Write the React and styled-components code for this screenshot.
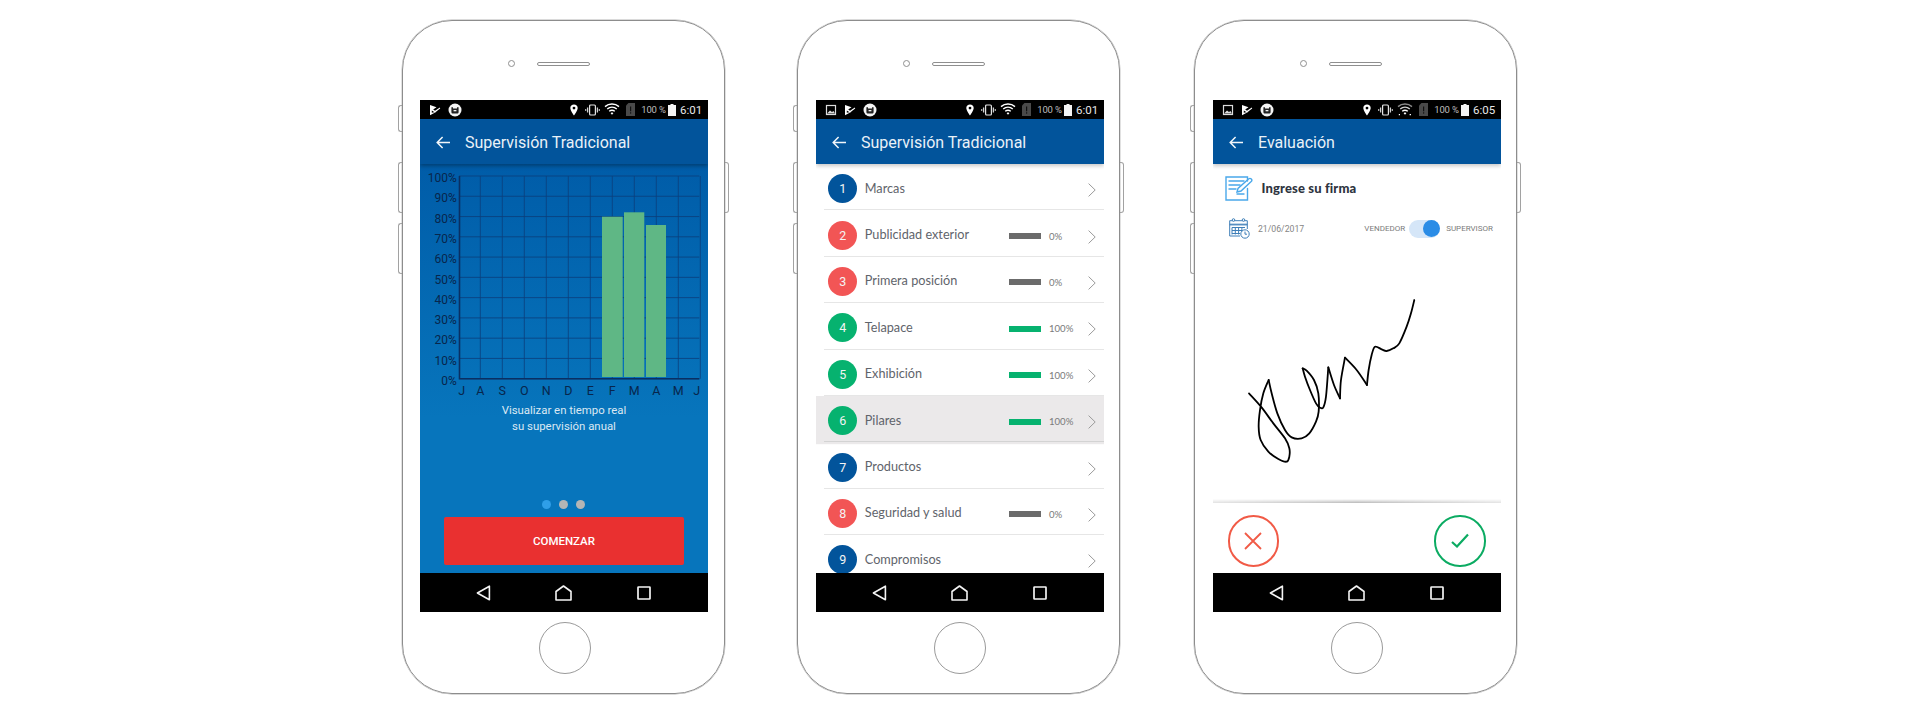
import React from 'react';
import styled, { createGlobalStyle } from 'styled-components';

const BLUE = '#02549b';
const RED = '#f25555';
const GREEN = '#06b26f';

const GlobalStyle = createGlobalStyle`
  html, body {
    margin: 0;
    padding: 0;
    background: #fff;
  }
  * {
    box-sizing: border-box;
  }
`;

const Page = styled.div`
  width: 1920px;
  height: 715px;
  overflow: hidden;
  padding: 20px 0 0 402.3px;
  display: grid;
  grid-template-columns: 395px 397px 323px;
  align-items: start;
  font-family: Roboto, "Liberation Sans", sans-serif;
`;

const Phone = styled.div`
  position: relative;
  width: 323px;
  height: 674px;
  border: 1px solid #8d8d8d;
  border-radius: 50px;
  box-shadow: 0 0 0 0.4px #b5b5b5;
  display: flex;
  flex-direction: column;
`;

const SideKey = styled.span`
  position: absolute;
  top: ${({ $top }) => $top}px;
  height: ${({ $h }) => $h}px;
  width: 4px;
  border: 1px solid #a2a2a2;
  ${({ $right }) => ($right
    ? 'right: -5px; border-left: 0; border-radius: 0 3px 3px 0;'
    : 'left: -5px; border-right: 0; border-radius: 3px 0 0 3px;')}
`;

const SensorRow = styled.div`
  height: 79px;
  padding: 39px 0 0 105.2px;
  display: flex;
  align-items: flex-start;
`;

const Camera = styled.span`
  width: 7px;
  height: 7px;
  border: 1px solid #8f8f8f;
  border-radius: 50%;
  margin-right: 21.5px;
`;

const Speaker = styled.span`
  width: 53px;
  height: 4px;
  margin-top: 1.5px;
  border: 1px solid #8f8f8f;
  border-radius: 2px;
`;

const Screen = styled.div`
  width: 288px;
  height: 512px;
  margin-left: ${({ $left }) => $left}px;
  background: #fff;
  display: flex;
  flex-direction: column;
  overflow: hidden;
`;

const HomeButton = styled.span`
  width: 52px;
  height: 52px;
  margin: 10px 0 0 136px;
  border: 1px solid #9a9a9a;
  border-radius: 50%;
`;

// status bar
const StatusBar = styled.div`
  flex: none;
  height: 19px;
  background: #000;
  display: flex;
  align-items: center;
  padding: 0 8px 0 9px;
`;

const StatusLeft = styled.div`
  display: flex;
  align-items: center;
  gap: 7px;
  flex: 1;
`;

const StatusIcon = styled.svg`
  display: block;
  flex: none;
  margin-right: ${({ $mr }) => $mr || 0}px;
`;

const Percent = styled.span`
  font-size: 9.5px;
  color: #bdbdbd;
  margin-right: 2px;
  letter-spacing: -0.1px;
`;

const Clock = styled.span`
  font-size: 11.5px;
  color: #e8e8e8;
  width: 20px;
  white-space: nowrap;
`;

const ImageGlyph = () => (
  <StatusIcon width="12" height="12" viewBox="0 0 12 12" fill="none">
    <rect x="1.5" y="1.5" width="9" height="9" stroke="#ddd" strokeWidth="1.2" />
    <path d="M2 9.5 L5 6.5 L7 8 L8.5 7 L10 9.5 Z" fill="#ddd" />
  </StatusIcon>
);

const PlayGlyph = () => (
  <StatusIcon width="12" height="12" viewBox="0 0 12 12">
    <path d="M1 1 L7.5 3.2 L4.2 5.6 L6 6.8 L10.8 3.6 L11.2 4.4 L6 8.6 L2.8 6.4 V8.8 L7.6 7.8 L1 11.2 Z" fill="#fff" />
  </StatusIcon>
);

const FaceGlyph = () => (
  <StatusIcon width="14" height="14" viewBox="0 0 14 14">
    <circle cx="7" cy="7" r="6.5" fill="#f4f4f4" />
    <path d="M3.4 4.2 H5 V5.6 H9 V4.2 H10.6 V9 C10.6 10 10 10.6 9 10.6 H5 C4 10.6 3.4 10 3.4 9 Z" fill="#222" />
    <rect x="5.6" y="7" width="2.8" height="1.3" fill="#f4f4f4" />
  </StatusIcon>
);

const PinGlyph = () => (
  <StatusIcon $mr={7} width="8" height="12" viewBox="0 0 8 12">
    <path fillRule="evenodd" d="M4 0.5 C1.9 0.5 0.3 2 0.3 4 C0.3 6.6 4 11.5 4 11.5 C4 11.5 7.7 6.6 7.7 4 C7.7 2 6.1 0.5 4 0.5 Z M4 2.7 A1.4 1.4 0 1 1 4 5.5 A1.4 1.4 0 1 1 4 2.7 Z" fill="#fff" />
  </StatusIcon>
);

const VibrateGlyph = () => (
  <StatusIcon $mr={4} width="15" height="12" viewBox="0 0 15 12" fill="none">
    <rect x="4.6" y="1" width="5.8" height="10" rx="1" stroke="#e4e4e4" strokeWidth="1.2" />
    <path d="M2.6 3.6 V8.4 M12.4 3.6 V8.4" stroke="#cfcfcf" strokeWidth="1.3" />
    <path d="M0.7 5 V7 M14.3 5 V7" stroke="#b5b5b5" strokeWidth="1.2" />
  </StatusIcon>
);

const WifiGlyph = ({ weak }) => (
  <StatusIcon $mr={6} width="16" height="13" viewBox="0 0 16 13" fill="none" strokeWidth="1.4">
    <path d="M1 3.6 C5 0.2 11 0.2 15 3.6" stroke={weak ? '#8a8a8a' : '#fff'} />
    <path d="M3.2 6 C6 3.7 10 3.7 12.8 6" stroke={weak ? '#d0d0d0' : '#fff'} />
    <path d="M5.2 8.3 C6.9 7.1 9.1 7.1 10.8 8.3" stroke="#fff" />
    <path d="M6.6 10.2 L8 9.2 L9.4 10.2 L8 11.8 Z" fill="#fff" stroke="none" />
    <path d="M12.6 11 H14 V12.2 H12.6 Z M1.8 11 H3 V12.2 H1.8 Z" fill={weak ? '#fff' : 'none'} stroke="none" />
  </StatusIcon>
);

const SimGlyph = () => (
  <StatusIcon $mr={6} width="9" height="13" viewBox="0 0 9 13">
    <path d="M2.5 0 H9 V13 H0 V2.5 Z" fill="#4a4a4a" />
    <rect x="4" y="3.5" width="1.2" height="4.8" fill="#111" />
    <rect x="4" y="9.3" width="1.2" height="1.3" fill="#111" />
  </StatusIcon>
);

const BatteryGlyph = () => (
  <StatusIcon $mr={4} width="8" height="12" viewBox="0 0 8 12">
    <path d="M2.5 0 H5.5 V1 H8 V12 H0 V1 H2.5 Z" fill="#f4f4f4" />
  </StatusIcon>
);

const Status = ({ time, image, weak }) => (
  <StatusBar>
    <StatusLeft>
      {image && <ImageGlyph />}
      <PlayGlyph />
      <FaceGlyph />
    </StatusLeft>
    <PinGlyph />
    <VibrateGlyph />
    <WifiGlyph weak={weak} />
    <SimGlyph />
    <Percent>100 %</Percent>
    <BatteryGlyph />
    <Clock>{time}</Clock>
  </StatusBar>
);

// app bar
const AppBar = styled.div`
  flex: none;
  position: relative;
  z-index: 2;
  height: 45px;
  background: ${BLUE};
  display: flex;
  align-items: center;
  padding: 1px 0 0 16px;
  gap: 15px;
  box-shadow: 0 2px 4px rgba(0, 0, 0, ${({ $soft }) => ($soft ? 0.22 : 0.32)});
`;

const Title = styled.span`
  font-size: 16px;
  color: #e9f1f8;
  white-space: nowrap;
`;

const Header = ({ title, soft }) => (
  <AppBar $soft={soft}>
    <svg width="14" height="13" viewBox="0 0 14 13" fill="none" stroke="#f2f6fa" strokeWidth="1.5">
      <path d="M14 6.5 H1.2 M6.6 1 L1.2 6.5 L6.6 12" />
    </svg>
    <Title>{title}</Title>
  </AppBar>
);

// nav bar
const NavBar = styled.div`
  flex: none;
  height: 39px;
  background: #000;
  display: grid;
  grid-template-columns: repeat(3, 80px);
  justify-content: center;
  justify-items: center;
  align-items: center;
`;

const Nav = () => (
  <NavBar>
    <svg width="15" height="16" viewBox="0 0 15 16" fill="none" stroke="#f4f4f4" strokeWidth="1.6" strokeLinejoin="round">
      <path d="M13.4 1.2 V14.8 L1.4 8 Z" />
    </svg>
    <svg width="17" height="16" viewBox="0 0 17 16" fill="none" stroke="#f4f4f4" strokeWidth="1.6" strokeLinejoin="round">
      <path d="M1 6.5 L8.5 1 L16 6.5 V15 H1 Z" />
    </svg>
    <svg width="14" height="14" viewBox="0 0 14 14" fill="none" stroke="#f4f4f4" strokeWidth="1.7">
      <rect x="1" y="1" width="12" height="12" rx="0.5" />
    </svg>
  </NavBar>
);

// first screen
const BlueBody = styled.div`
  flex: 1;
  min-height: 0;
  display: flex;
  flex-direction: column;
  background: linear-gradient(to bottom, #005ca8 0%, #0775bc 62%, #0775bc 100%);
`;

const ChartSvg = styled.svg`
  display: block;
  flex: none;
  font-family: Roboto, "Liberation Sans", sans-serif;
`;

const Caption = styled.p`
  margin: 3px 0 0;
  font-size: 11.4px;
  line-height: 15.5px;
  text-align: center;
  color: #dbe8f3;
`;

const Dots = styled.div`
  margin-top: auto;
  display: flex;
  justify-content: center;
  gap: 8px;
`;

const Dot = styled.span`
  width: 9px;
  height: 9px;
  border-radius: 50%;
  background: ${({ $active }) => ($active ? '#2f9fe8' : '#b5b5b5')};
`;

const StartButton = styled.div`
  margin: 8px 24px 8px;
  height: 48px;
  background: #e93030;
  border-radius: 2px;
  display: flex;
  align-items: center;
  justify-content: center;
  color: #fff;
  font-size: 11.5px;
  font-weight: 500;
`;

const MONTHS = [
  ['J', 41.7], ['A', 60.3], ['S', 82.3], ['O', 104.3], ['N', 126.3], ['D', 148.3],
  ['E', 170.3], ['F', 192.3], ['M', 214.3], ['A', 236.3], ['M', 258.3], ['J', 276.7]
];
const BARS = [[182, 20.7, 52.7], [204, 20.3, 48.3], [226, 20, 61]];

const Chart = () => {
  const rows = Array.from({ length: 11 }, (_, i) => 12 + i * 20.27);
  const columns = Array.from({ length: 11 }, (_, i) => 60.3 + i * 22);
  return (
    <ChartSvg width="288" height="236" viewBox="0 0 288 236">
      {rows.map((y, i) => (
        <g key={y}>
          <line x1="39" x2="279.3" y1={y} y2={y} stroke="#0b3f7c" strokeOpacity="0.8" strokeWidth="1" />
          <text x="36.8" y={y + 6.2} textAnchor="end" fontSize="12" fill="#08264c">{100 - i * 10}%</text>
        </g>
      ))}
      {columns.map((x) => (
        <line key={x} x1={x} x2={x} y1="12" y2="214.7" stroke="#0b3f7c" strokeOpacity="0.8" strokeWidth="1" />
      ))}
      {BARS.map(([x, w, y]) => (
        <rect key={x} x={x} y={y} width={w} height={213 - y} fill="#5fb785" />
      ))}
      <path d="M39.5 12 V214.7 H279.3" fill="none" stroke="#0a2f63" strokeWidth="1.6" />
      {MONTHS.map(([m, x]) => (
        <text key={x} x={x} y="230.5" textAnchor="middle" fontSize="12.5" fill="#08264c">{m}</text>
      ))}
    </ChartSvg>
  );
};

// second screen
const List = styled.div`
  flex: 1;
  min-height: 0;
  overflow: hidden;
`;

const Row = styled.div`
  height: 46.4px;
  background: ${({ $active }) => ($active ? '#ebe9ea' : 'transparent')};
  ${({ $active }) => ($active ? 'box-shadow: 0 2.2px 0 #ebe9ea;' : '')}
`;

const RowInner = styled.div`
  height: 100%;
  margin-left: 8px;
  padding: 4px 8px 0 4.3px;
  border-bottom: 1.6px solid ${({ $active }) => ($active ? '#d3d3d3' : '#e6e6e6')};
  display: grid;
  grid-template-columns: 29px 1fr 32px 47px 8px;
  align-items: center;
`;

const Badge = styled.span`
  width: 29px;
  height: 29px;
  border-radius: 50%;
  background: ${({ $color }) => $color};
  color: #f4f4f4;
  font-size: 12.5px;
  display: flex;
  align-items: center;
  justify-content: center;
`;

const RowLabel = styled.span`
  padding: 0 0 2px 7.5px;
  font-family: Lato, "Liberation Sans", sans-serif;
  font-size: 12.7px;
  color: #5f646b;
  white-space: nowrap;
`;

const Bar = styled.span`
  height: 6px;
  margin-top: 2px;
  background: ${({ $done }) => ($done ? GREEN : '#6b6b6b')};
`;

const BarValue = styled.span`
  padding-left: 8px;
  margin-top: 2px;
  font-family: Lato, "Liberation Sans", sans-serif;
  font-size: 9.6px;
  color: #7a7a7a;
`;

const Chevron = styled.svg`
  grid-column: 5;
  display: block;
  margin-top: 3px;
`;

const ITEMS = [
  [1, 'Marcas', BLUE],
  [2, 'Publicidad exterior', RED, 0],
  [3, 'Primera posición', RED, 0],
  [4, 'Telapace', GREEN, 100],
  [5, 'Exhibición', GREEN, 100],
  [6, 'Pilares', GREEN, 100],
  [7, 'Productos', BLUE],
  [8, 'Seguridad y salud', RED, 0],
  [9, 'Compromisos', BLUE]
];

// third screen
const SignBody = styled.div`
  flex: 1;
  min-height: 0;
  display: flex;
  flex-direction: column;
`;

const SignTitle = styled.div`
  display: flex;
  align-items: center;
  gap: 8.5px;
  padding: 12px 0 0 12px;
  font-family: Lato, "Liberation Sans", sans-serif;
  font-size: 13px;
  font-weight: 900;
  letter-spacing: 0.15px;
  color: #2e3440;
`;

const SignTitleText = styled.span`
  margin-bottom: 2px;
`;

const InfoRow = styled.div`
  display: flex;
  align-items: center;
  margin-top: 17px;
  padding: 0 8px 0 16px;
`;

const DateText = styled.span`
  margin-left: 8px;
  flex: 1;
  font-size: 8.7px;
  color: #858585;
`;

const RoleText = styled.span`
  font-size: 8px;
  color: #7b7b7b;
`;

const Toggle = styled.span`
  width: 31px;
  height: 18px;
  margin: 0 6px 0 4px;
  border-radius: 9px;
  background: #d5e6f8;
  display: flex;
  align-items: center;
  justify-content: flex-end;
`;

const Knob = styled.span`
  width: 17px;
  height: 17px;
  border-radius: 50%;
  background: #2a8ce6;
`;

const SignArea = styled.div`
  flex: 1;
  min-height: 0;
  padding: 61px 0 0 36px;
`;

const Divider = styled.div`
  flex: none;
  height: 4px;
  background: linear-gradient(to bottom, rgba(0, 0, 0, 0), rgba(0, 0, 0, 0.28));
  -webkit-mask-image: linear-gradient(to right, rgba(0, 0, 0, 0.4), #000 50%, rgba(0, 0, 0, 0.4));
  mask-image: linear-gradient(to right, rgba(0, 0, 0, 0.4), #000 50%, rgba(0, 0, 0, 0.4));
`;

const Actions = styled.div`
  flex: none;
  height: 70px;
  padding: 12px 15px 0 14.7px;
  display: flex;
  justify-content: space-between;
  align-items: flex-start;
`;

const RoundButton = styled.span`
  width: 51.5px;
  height: 51.5px;
  border-radius: 50%;
  border: 2px solid ${({ $color }) => $color};
  display: flex;
  align-items: center;
  justify-content: center;
`;

const FormIcon = () => (
  <svg width="28" height="25" viewBox="0 0 28 25" fill="none" stroke="#4aa8ea" strokeWidth="1.4" strokeLinecap="round">
    <path d="M22.5 12.5 V24 H1 V1 H22.5 V5" />
    <path d="M4 5 H19 M4 9 H15 M4 13 H11 M12 18 H19" />
    <path d="M12 16 L13 12.5 L23.5 3 C24.5 2.2 25.5 2.2 26.3 3 C27 3.8 27 4.8 26.2 5.6 L16 15 Z" />
  </svg>
);

const CalendarIcon = () => (
  <svg width="21" height="21" viewBox="0 0 21 21" fill="none" stroke="#3f7fb8" strokeWidth="1">
    <path d="M11 18 H0.7 V2.7 H18.3 V11" />
    <path d="M0.7 6.2 H18.3 M0.7 6.9 H18.3" />
    <circle cx="4.5" cy="2" r="1.3" fill="#fff" />
    <circle cx="14.5" cy="2" r="1.3" fill="#fff" />
    <path d="M3 9.5 H16 M3 12.5 H13 M3 15.5 H11 M3 9.5 V16.5 M6.3 9.5 V16.5 M9.6 9.5 V16.5 M12.9 9.5 V13" />
    <circle cx="16" cy="16" r="4.2" fill="#fff" />
    <path d="M16 13.6 V16.2 H18" />
  </svg>
);

// pen strokes in the coordinates of the signature, each one smoothed on its own
const STROKES = [
  [[177, 340], [213, 380], [250, 430], [285, 475], [298, 505], [298, 530], [290, 545], [265, 537], [235, 515], [212, 480], [206, 440], [210, 390], [220, 340], [236, 300]],
  [[236, 300], [245, 340], [262, 400], [285, 450], [305, 472], [335, 475], [358, 460], [378, 425], [386, 395], [385, 340], [372, 300], [350, 272], [338, 265]],
  [[338, 265], [345, 290], [360, 330], [378, 370], [390, 383], [400, 382], [408, 350], [415, 262]],
  [[415, 262], [432, 315], [450, 355]],
  [[450, 355], [453, 300], [465, 233]],
  [[465, 233], [500, 270], [531, 315]],
  [[531, 315], [536, 270], [545, 225], [555, 200], [575, 208], [590, 213], [610, 205], [628, 190], [650, 140], [663, 100], [673, 60]]
];

const smooth = (pts) => {
  let d = `M${pts[0][0]} ${pts[0][1]}`;
  for (let i = 0; i < pts.length - 1; i++) {
    const p0 = pts[i - 1] || pts[i];
    const p1 = pts[i];
    const p2 = pts[i + 1];
    const p3 = pts[i + 2] || p2;
    d += ` C${p1[0] + (p2[0] - p0[0]) / 6} ${p1[1] + (p2[1] - p0[1]) / 6} ${p2[0] - (p3[0] - p1[0]) / 6} ${p2[1] - (p3[1] - p1[1]) / 6} ${p2[0]} ${p2[1]}`;
  }
  return d;
};

const SignatureSvg = styled.svg`
  display: block;
  overflow: visible;
`;

const Signature = () => (
  <SignatureSvg width="165.3" height="161.7" viewBox="177 60 496 485" fill="none" stroke="#000" strokeWidth="5.4" strokeLinecap="round" strokeLinejoin="round">
    {STROKES.map((pts) => <path key={pts[0].join()} d={smooth(pts)} />)}
  </SignatureSvg>
);

const Device = ({ children, left }) => (
  <Phone>
    <SideKey $top={84} $h={27} />
    <SideKey $top={141} $h={51} />
    <SideKey $top={202} $h={51} />
    <SideKey $right $top={141} $h={51} />
    <SensorRow>
      <Camera />
      <Speaker />
    </SensorRow>
    <Screen $left={left}>{children}</Screen>
    <HomeButton />
  </Phone>
);

export default function App() {
  return (
    <>
      <GlobalStyle />
      <Page>
        <Device left={16.7}>
          <Status time="6:01" />
          <Header title="Supervisión Tradicional" />
          <BlueBody>
            <Chart />
            <Caption>Visualizar en tiempo real<br />su supervisión anual</Caption>
            <Dots>
              <Dot $active />
              <Dot />
              <Dot />
            </Dots>
            <StartButton>COMENZAR</StartButton>
          </BlueBody>
          <Nav />
        </Device>

        <Device left={17.7}>
          <Status time="6:01" image />
          <Header title="Supervisión Tradicional" soft />
          <List>
            {ITEMS.map(([n, label, color, value]) => (
              <Row key={n} $active={n === 6}>
                <RowInner $active={n === 6}>
                  <Badge $color={color}>{n}</Badge>
                  <RowLabel>{label}</RowLabel>
                  {value !== undefined && <Bar $done={value === 100} />}
                  {value !== undefined && <BarValue>{value}%</BarValue>}
                  <Chevron width="8" height="14" viewBox="0 0 8 14" fill="none" stroke="#9a9a9a" strokeWidth="1">
                    <path d="M0.6 0.6 L7.2 7 L0.6 13.4" />
                  </Chevron>
                </RowInner>
              </Row>
            ))}
          </List>
          <Nav />
        </Device>

        <Device left={17.7}>
          <Status time="6:05" image weak />
          <Header title="Evaluación" soft />
          <SignBody>
            <SignTitle>
              <FormIcon />
              <SignTitleText>Ingrese su firma</SignTitleText>
            </SignTitle>
            <InfoRow>
              <CalendarIcon />
              <DateText>21/06/2017</DateText>
              <RoleText>VENDEDOR</RoleText>
              <Toggle><Knob /></Toggle>
              <RoleText>SUPERVISOR</RoleText>
            </InfoRow>
            <SignArea>
              <Signature />
            </SignArea>
            <Divider />
            <Actions>
              <RoundButton $color="#f15a46">
                <svg width="18" height="18" viewBox="0 0 18 18" fill="none" stroke="#f15a46" strokeWidth="1.8">
                  <path d="M1 1 L17 17 M17 1 L1 17" />
                </svg>
              </RoundButton>
              <RoundButton $color="#0bab62">
                <svg width="18" height="15" viewBox="0 0 18 15" fill="none" stroke="#0bab62" strokeWidth="2.2">
                  <path d="M1 9 L6 13.5 L17 1.5" />
                </svg>
              </RoundButton>
            </Actions>
          </SignBody>
          <Nav />
        </Device>
      </Page>
    </>
  );
}
